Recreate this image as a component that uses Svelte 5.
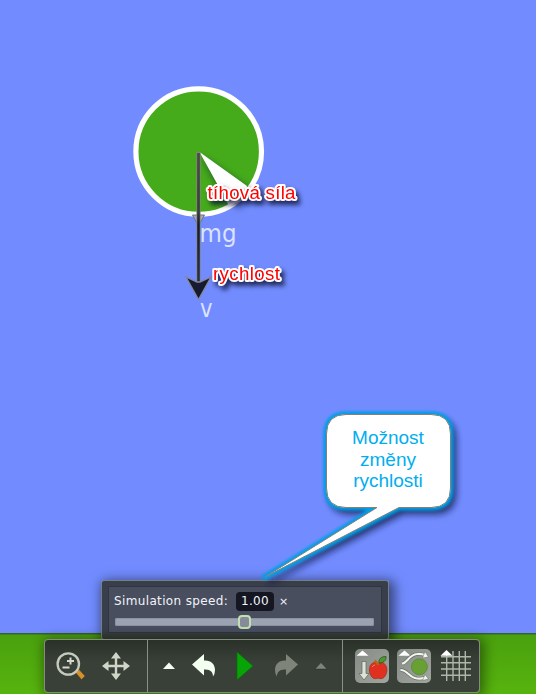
<script>
  let speed = $state('1.00');
  const lines = ['Možnost', 'změny', 'rychlosti'];
  const bubble = 'M346 414.5H431Q450.500 414.500 450.500 434V488Q450.500 507.500 431 507.500H399L265 577L377 507.500H346Q326.500 507.500 326.500 488V434Q326.500 414.500 346 414.500Z';
</script>

<main class="stage">
  <svg class="scene" viewBox="0 0 536 694" width="536" height="694">
    <defs>
      <linearGradient id="ground" x1="0" y1="0" x2="0" y2="1">
        <stop offset="0" stop-color="#49a00e" />
        <stop offset="1" stop-color="#57b40e" />
      </linearGradient>
      <linearGradient id="shaft" gradientUnits="userSpaceOnUse" x1="0" y1="152" x2="0" y2="284">
        <stop offset="0" stop-color="#4a4c49" />
        <stop offset=".45" stop-color="#3a3e3a" />
        <stop offset=".55" stop-color="#171b30" />
        <stop offset="1" stop-color="#2a3050" />
      </linearGradient>
      <filter id="soft" x="-30%" y="-30%" width="160%" height="160%">
        <feGaussianBlur stdDeviation="3.5" />
      </filter>
      <filter id="glow" x="-30%" y="-30%" width="160%" height="160%">
        <feGaussianBlur stdDeviation="1.5" />
      </filter>
    </defs>
    <rect width="536" height="694" fill="#728cff" />
    <rect y="633" width="536" height="61" fill="url(#ground)" />
    <rect y="633" width="536" height="1.5" fill="#34642f" />

    <circle cx="198.7" cy="151.6" r="62.8" fill="#45ab1b" stroke="#fff" stroke-width="5.2" />
    <path d="M201 156L251 190L240 209L222 194Z" fill="#0c1830" opacity=".5" filter="url(#soft)" />
    <path d="M199.5 152L247 186L243 200L229 206L220 189Z" fill="#fff" />

    <path d="M192.500 215h12l-6 11z" fill="#a3a8ba" stroke="#6f7484" />
    <path d="M198.500 152v132" stroke="#85877f" stroke-width="4.200" />
    <path d="M198.500 153v130" stroke="#3a3e3a" stroke-width="2.200" />
    <rect x="197.400" y="153" width="2.200" height="130" fill="url(#shaft)" />
    <path d="M198.500 299.500L186 277L197 282H200L211 277Z" fill="#171b30" stroke="#85889a" stroke-width="1.300" />

    <g class="vector">
      <text x="199.500" y="241.700" textLength="37" lengthAdjust="spacingAndGlyphs">mg</text>
      <text x="200" y="317" textLength="12.500" lengthAdjust="spacingAndGlyphs">v</text>
    </g>

    <g class="note">
      <text x="207.500" y="199" textLength="88">tíhová síla</text>
      <text x="213" y="279.500" textLength="67">rychlost</text>
    </g>
  </svg>

  <section class="speed">
    <div class="inner">
      <div class="row">
        <span>Simulation speed:</span>
        <span class="value">{speed}</span>
        <span class="times">×</span>
      </div>
      <div class="track"><i class="thumb"></i></div>
    </div>
  </section>

  <nav class="toolbar">
    <div class="group first">
      <svg width="32" height="32" viewBox="0 0 32 32">
        <path d="M20.500 22.500l3.500-3 6 6.500-3.500 3.500z" fill="#d4922a" stroke="#4d3c22" stroke-width=".4" />
        <circle cx="13.300" cy="14" r="10.700" fill="none" stroke="#c5cabd" stroke-width="2.300" />
        <path d="M15.500 7.500v7M12 11h7M7.500 17.500h7" stroke="#d5dace" stroke-width="2" fill="none" />
      </svg>
      <svg width="32" height="32" viewBox="0 0 32 32">
        <path d="M16 2l5 6.500h-3.800v6.300H23.500V11L30 16l-6.500 5v-3.800H17.200v6.300H21L16 30l-5-6.500h3.800v-6.300H8.500V21L2 16l6.500-5v3.800h6.300V8.500H11z" fill="#d0d5c8" />
      </svg>
    </div>

    <div class="group middle">
      <svg width="12" height="10" viewBox="0 0 12 10"><path d="M6 1.500L12 8H0z" fill="#f3fff0" /></svg>
      <svg width="24" height="24" viewBox="0 0 24 24">
        <path d="M0 10.500L12 0V6.500C19 6 23 10 23 16Q23 20 21 22.500C21 18 18.500 15 12 15.500V21.500Z" fill="#f3fff0" />
      </svg>
      <svg class="play" width="18" height="32" viewBox="0 0 18 32"><path d="M1 2L17 16L1 30Z" fill="#08a306" stroke="#0a6c0b" stroke-width=".8" /></svg>
      <svg class="redo" width="24" height="24" viewBox="0 0 24 24">
        <path d="M24 10.500L12 0V6.500C5 6 1 10 1 16Q1 20 3 22.500C3 18 5.500 15 12 15.500V21.500Z" fill="#7e8479" />
      </svg>
      <svg width="12" height="10" viewBox="0 0 12 10"><path d="M6 1.500L12 8H0z" fill="#7e8479" stroke="#20251f" stroke-width=".4" /></svg>
    </div>

    <div class="group last">
      <span class="tile">
        <svg width="34" height="34" viewBox="0 0 34 34">
          <path d="M7.500 1.500l6 5.200h-12z" fill="#fff" />
          <path d="M11 12.500H7V24.500H4L9 31l5-6.500h-3z" fill="#dce4d8" stroke="#5b655c" stroke-width=".7" />
          <path d="M23 14.800C20 11.500 14.300 14.500 14.300 20.500C14.300 25 17 30 20.500 29.700L23 29.200L25.500 29.700C29.500 30 32 25 32 20.500C32 14.500 26 11.500 23 14.800Z" fill="#e0301f" stroke="#8d251b" stroke-width=".5" />
          <path d="M17 18Q18 16 20 16" fill="none" stroke="#f28370" stroke-width="1" />
          <path d="M23 16Q22.500 13 19.500 11.500" stroke="#b66c13" stroke-width="2" fill="none" />
          <path d="M24 14C23.500 10 26 7.500 31 7.500C31.500 12 28 14 24 14Z" fill="#4c9a2e" stroke="#28502b" stroke-width=".8" />
        </svg>
      </span>
      <span class="tile">
        <svg width="34" height="34" viewBox="0 0 34 34">
          <path d="M7.500 1.500l6 5.200h-12z" fill="#fff" />
          <circle cx="22.400" cy="17.800" r="8" fill="#69a034" stroke="#4f7f30" stroke-width=".6" />
          <g class="flow under">
            <path d="M5 14.500C10 14.500 12 5.500 20 5Q25 4.500 28 6.500" />
            <path d="M3.500 21C10 20.500 12 28.500 20 29.500Q25 30 28 28.500" />
          </g>
          <g class="flow">
            <path d="M5 14.500C10 14.500 12 5.500 20 5Q25 4.500 28 6.500" />
            <path d="M3.500 21C10 20.500 12 28.500 20 29.500Q25 30 28 28.500" />
          </g>
          <path d="M28 2.500l3.500 5.500-6 1zM28 25.500l3.500 4.500-6 1.500z" fill="#f1f5ec" stroke="#626b62" stroke-width=".5" />
        </svg>
      </span>
      <svg width="34" height="34" viewBox="0 0 34 34">
        <path d="M7.700 2v30M14 2v30M20.300 2v30M26.300 2v30M2 7.700h30M2 13.700h30M2 20h30M2 26.300h30" fill="none" stroke="#aeb5a9" stroke-width="1.400" />
        <path d="M7.500 1l6 5.800h-12z" fill="#fff" />
      </svg>
    </div>
  </nav>

  <aside class="bubble">
    <svg width="210" height="190" viewBox="255 400 210 190">
      <path d={bubble} fill="#101640" stroke="#101640" stroke-width="3" opacity=".8" filter="url(#soft)" transform="translate(4 5)" />
      <path d={bubble} fill="#009fe8" stroke="#009fe8" stroke-width="6" stroke-linejoin="round" filter="url(#glow)" />
      <path d={bubble} fill="#fff" stroke="#858078" />
    </svg>
    <p>{#each lines as line}<span>{line}</span>{/each}</p>
  </aside>
</main>

<style>
  :global(body) { margin: 0; }
  .stage { position: relative; width: 536px; height: 694px; overflow: hidden; }
  .scene, svg { display: block; flex: none; }
  .vector { font: 24px 'DejaVu Sans', sans-serif; fill: #dce2ff; }
  .note {
    font: 18.7px 'Liberation Sans', Arial, sans-serif; fill: #f00; stroke: #fff; stroke-width: 4px;
    stroke-linejoin: round; paint-order: stroke; filter: drop-shadow(3px 4px 2.5px rgba(10, 15, 50, .8));
  }

  .speed {
    position: absolute; left: 101px; top: 580px; width: 288px; height: 60px;
    box-sizing: border-box; padding: 5px 6px 7px; border: 1px solid #777f80; border-radius: 3px;
    background: linear-gradient(#393e4b 0, #393e4b 50px, #353e36 54px);
    box-shadow: 3px 3px 12px 3px rgba(0, 0, 0, .5);
  }
  .inner {
    height: 47px; box-sizing: border-box; padding: 4px 7px 4px 5px; border: 1px solid #303542;
    background: #484e5e; display: flex; flex-direction: column; gap: 7px;
  }
  .row { display: flex; align-items: center; height: 20px; color: #f2f4fa; font: 12px 'DejaVu Sans', sans-serif; }
  .row > :first-child { width: 122px; letter-spacing: .36px; white-space: nowrap; }
  .value { width: 38px; height: 19px; line-height: 19px; text-align: center; border-radius: 4px; background: #141722; letter-spacing: .3px; }
  .times { margin-left: 5px; font-size: 11px; }
  .track { position: relative; flex: none; height: 8px; margin: 0 0 0 1px; border-radius: 2px; background: #9ba2b2; box-shadow: 0 0 0 1px #8b92a2 inset; }
  .thumb { position: absolute; left: 123px; top: -3px; width: 9px; height: 10px; border: 2px solid #c2dfb3; border-radius: 4px; background: #858b99; }

  .toolbar {
    position: absolute; left: 44px; top: 639px; width: 436px; height: 54px; box-sizing: border-box;
    display: flex; border: 1px solid #848c80; border-radius: 4px;
    background: linear-gradient(#293128, #384038 22px, #384038);
    box-shadow: 2px 2px 12px 3px rgba(0, 0, 0, .4);
  }
  .group { display: flex; align-items: center; box-sizing: border-box; }
  .group + .group { border-left: 1px solid #899184; }
  .first { width: 102px; padding-left: 10px; gap: 13px; }
  .middle { width: 195px; padding-left: 15px; gap: 17px; }
  .play { margin-left: 3px; }
  .redo { margin-left: 3px; }
  .last { padding-left: 12px; gap: 8px; }
  .tile { width: 34px; height: 34px; border-radius: 5px; background: linear-gradient(135deg, #858b85, #a1a69f); }
  .flow { fill: none; stroke: #f1f5ec; stroke-width: 2.2; }
  .under { stroke: #626b62; stroke-width: 3.4; }

  .bubble { position: absolute; left: 255px; top: 400px; width: 210px; height: 190px; }
  .bubble svg { position: absolute; overflow: visible; }
  .bubble p {
    position: relative; display: flex; flex-direction: column; align-items: center; margin: 0;
    padding: 27px 5px 0 61px; font: 19px/21.5px 'Liberation Sans', Arial, sans-serif; color: #00aeef;
  }
</style>
